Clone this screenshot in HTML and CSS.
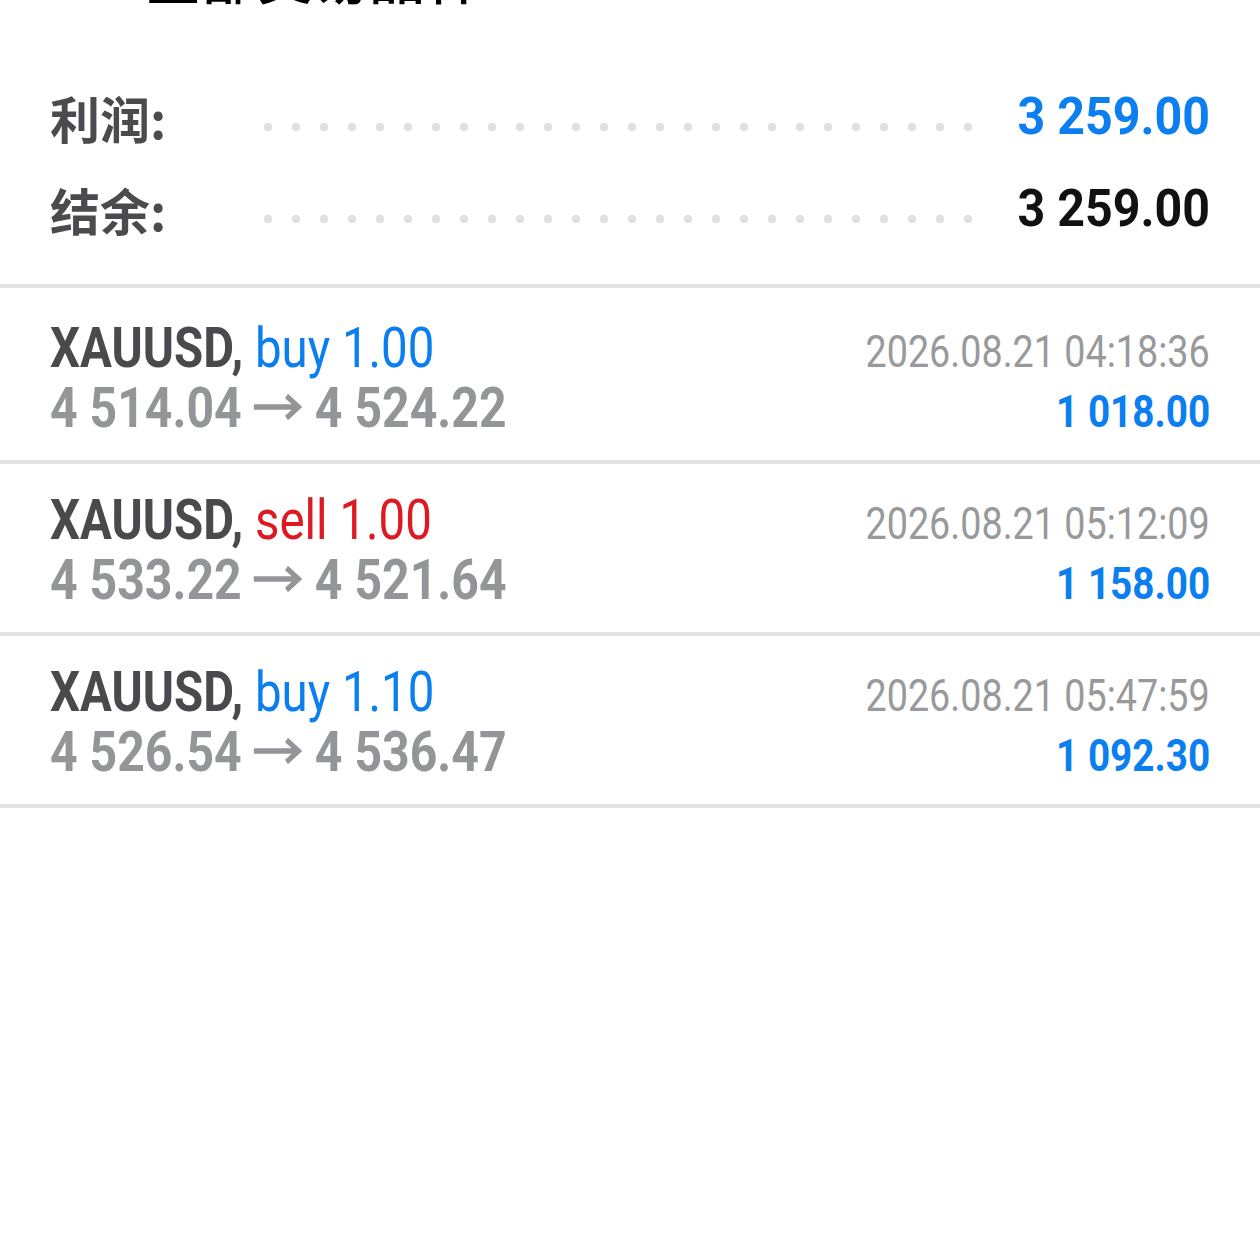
FILE: index.html
```html
<!DOCTYPE html>
<html>
<head>
	<meta charset="utf-8">
	<title>交易历史</title>
	<link rel="stylesheet" href="styles.css">
</head>
<body>
	<div class="header">全部交易品种</div>

	<div class="summary">
		<div class="sum_row">
			<span class="sum_label">利润:</span>
			<span class="dots"></span>
			<span class="sum_value"><span class="cond blue">3 259.00</span></span>
		</div>
		<div class="sum_row">
			<span class="sum_label">结余:</span>
			<span class="dots"></span>
			<span class="sum_value"><span class="cond">3 259.00</span></span>
		</div>
	</div>

	<ul class="deals">
		<li class="deal">
			<div class="line">
				<span class="cond left name">XAUUSD, <span class="blue type">buy 1.00</span></span>
				<span class="cond right date">2026.08.21 04:18:36</span>
			</div>
			<div class="line">
				<span class="cond left price">4 514.04<svg class="arrow" viewBox="0 0 58 28"><path d="M2 14H54M40 3L54 14L40 25"/></svg>4 524.22</span>
				<span class="cond right profit blue">1 018.00</span>
			</div>
		</li>
		<li class="deal">
			<div class="line">
				<span class="cond left name">XAUUSD, <span class="red type">sell 1.00</span></span>
				<span class="cond right date">2026.08.21 05:12:09</span>
			</div>
			<div class="line">
				<span class="cond left price">4 533.22<svg class="arrow" viewBox="0 0 58 28"><path d="M2 14H54M40 3L54 14L40 25"/></svg>4 521.64</span>
				<span class="cond right profit blue">1 158.00</span>
			</div>
		</li>
		<li class="deal">
			<div class="line">
				<span class="cond left name">XAUUSD, <span class="blue type">buy 1.10</span></span>
				<span class="cond right date">2026.08.21 05:47:59</span>
			</div>
			<div class="line">
				<span class="cond left price">4 526.54<svg class="arrow" viewBox="0 0 58 28"><path d="M2 14H54M40 3L54 14L40 25"/></svg>4 536.47</span>
				<span class="cond right profit blue">1 092.30</span>
			</div>
		</li>
	</ul>
</body>
</html>
```

FILE: styles.css
```css
body,ul,li,div{margin:0;padding:0;}
li{list-style:none;}
body{background:#fff;font-family:Roboto,"Noto Sans CJK SC",sans-serif;color:#111;overflow:hidden;}

/* 顶部标题，只露出底部一点 */
.header{font-family:"Noto Sans CJK SC",sans-serif;font-size:56px;font-weight:500;line-height:56px;height:56px;margin-top:-53px;padding-left:145px;color:#000;}

.summary{padding:68px 50px 29px 50px;border-bottom:4px solid #e4e4e4;}
.sum_row{display:flex;align-items:center;height:92px;}
.sum_label{width:204px;font-family:"Noto Sans CJK SC",sans-serif;font-weight:700;font-size:50px;color:#4b4b4f;}
.dots{width:728px;height:10px;margin-top:20px;background:radial-gradient(circle at 14px 5px,#e0e0e0 4px,transparent 4.6px) repeat-x;background-size:28px 10px;}
.sum_value{flex:1;text-align:right;font-size:52px;font-weight:700;line-height:60px;}
.sum_value .cond{transform:scaleX(.93);transform-origin:right center;}

.cond{display:inline-block;white-space:nowrap;transform:scaleX(.86);}
.left{transform-origin:left center;}
.right{transform-origin:right center;}

.deal{padding:26px 50px 22px 50px;border-bottom:4px solid #e4e4e4;}
.deal:first-child{padding-top:30px;}
.line{display:flex;justify-content:space-between;align-items:baseline;height:60px;line-height:60px;}
.name{font-size:56px;font-weight:700;color:#4a4a4e;transform:scaleX(.847);}
.type{font-weight:400;}
.price{font-size:56px;font-weight:700;color:#939598;}
.arrow{width:58px;height:28px;margin:0 15px 0 12px;vertical-align:6px;fill:none;stroke:#939598;stroke-width:5.5;}
.date{font-size:45px;color:#98999b;transform:scaleX(.838);}
.profit{font-size:45px;font-weight:700;}

.blue{color:#0b7ef0;}
.red{color:#dd1a22;}
```
